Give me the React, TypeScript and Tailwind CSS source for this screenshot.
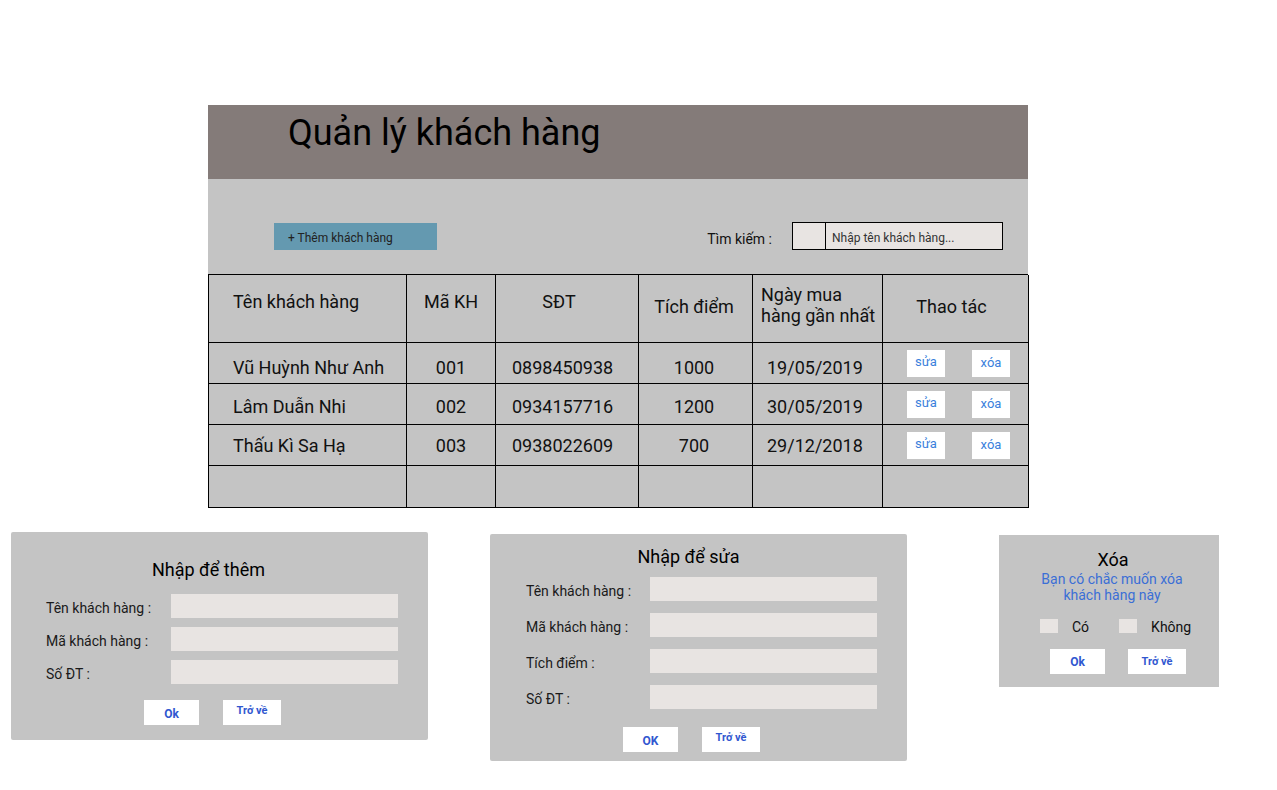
import React from 'react';

const rows = [
  { name: 'Vũ Huỳnh Như Anh', id: '001', phone: '0898450938', points: '1000', date: '19/05/2019', pad: 'pt-[8px]' },
  { name: 'Lâm Duẫn Nhi', id: '002', phone: '0934157716', points: '1200', date: '30/05/2019', pad: 'pt-[5px]' },
  { name: 'Thấu Kì Sa Hạ', id: '003', phone: '0938022609', points: '700', date: '29/12/2018', pad: 'pt-[1px]' },
];

const cell = 'border-r border-b border-black flex';

const FormRow: React.FC<{ label: string; labelW: string }> = ({ label, labelW }) => (
  <div className="flex items-center h-6">
    <span className={`${labelW} text-[14px] text-[#1a1a1a] pt-[4px]`}>{label}</span>
    <div className="w-[227px] h-6 bg-[#e8e4e2]" />
  </div>
);

const DialogButtons: React.FC<{ ok: string; offset: string }> = ({ ok, offset }) => (
  <div className={`flex gap-6 ${offset}`}>
    <button className="w-[55px] h-[25px] bg-white text-[12px] font-bold text-[#3157d0] pt-[3px]">{ok}</button>
    <button className="w-[58px] h-[25px] bg-white text-[11px] font-bold text-[#3157d0] pb-[2px]">Trở về</button>
  </div>
);

export default function App() {
  return (
    <div className="w-[1277px] h-[790px] bg-white pt-[105px] font-['Roboto','Liberation_Sans',sans-serif] text-black">
      <div className="ml-[208px] w-[820px] bg-[#c4c4c4]">
        <div className="h-[74px] bg-[#847b79] pl-[80px] pt-[4px]">
          <h1 className="text-[36px] leading-[48px] text-black">Quản lý khách hàng</h1>
        </div>
        <div className="h-[95px] flex items-start pt-[43px]">
          <button className="ml-[66px] mt-[1px] w-[163px] h-[27px] bg-[#6499b0] text-left pl-[14px] pt-[3px] text-[12px] text-[#222]">
            + Thêm khách hàng
          </button>
          <span className="ml-auto mt-[7px] text-[14px] text-[#111]">Tìm kiếm :</span>
          <div className="ml-[20px] mr-[25px] w-[211px] h-[28px] border border-black bg-[#e8e4e2] flex">
            <div className="w-[33px] h-full border-r border-black" />
            <span className="pl-[6px] pt-[6px] text-[12px] text-[#333]">Nhập tên khách hàng...</span>
          </div>
        </div>
        <div className="grid grid-cols-[198px_89px_143px_114px_130px_146px] border-l border-t border-black text-[18px] text-[#111]">
          <div className={`${cell} h-[68px] pl-6 pt-[13px]`}>Tên khách hàng</div>
          <div className={`${cell} justify-center pt-[13px]`}>Mã KH</div>
          <div className={`${cell} justify-center pt-[13px] pr-4`}>SĐT</div>
          <div className={`${cell} justify-center pt-[18px] pr-[3px]`}>Tích điểm</div>
          <div className={`${cell} pl-2 pt-[9px] leading-[21px]`}>Ngày mua<br />hàng gần nhất</div>
          <div className={`${cell} justify-center pt-[18px] pr-2`}>Thao tác</div>
          {rows.map(r => (
            <React.Fragment key={r.id}>
              <div className={`${cell} h-[41px] items-center pl-6 ${r.pad}`}>{r.name}</div>
              <div className={`${cell} items-center justify-center ${r.pad}`}>{r.id}</div>
              <div className={`${cell} items-center pl-4 ${r.pad}`}>{r.phone}</div>
              <div className={`${cell} items-center justify-center pr-[3px] ${r.pad}`}>{r.points}</div>
              <div className={`${cell} items-center pl-[14px] ${r.pad}`}>{r.date}</div>
              <div className={`${cell} items-center pl-[24px] gap-[27px]`}>
                <span className="w-[38px] h-[27px] bg-white text-[13px] text-[#3b7fdc] flex items-center justify-center pb-[2px]">sửa</span>
                <span className="w-[38px] h-[27px] bg-white text-[13px] text-[#3b7fdc] flex items-center justify-center">xóa</span>
              </div>
            </React.Fragment>
          ))}
          <div className={`${cell} h-[42px]`} />
          <div className={cell} />
          <div className={cell} />
          <div className={cell} />
          <div className={cell} />
          <div className={cell} />
        </div>
      </div>

      <div className="flex items-start mt-[24px]">
        <div className="ml-[11px] w-[417px] h-[208px] bg-[#c4c4c4] rounded-[2px] pt-[26px]">
          <h2 className="text-center text-[18px] leading-6 pr-[22px]">Nhập để thêm</h2>
          <div className="mt-3 pl-[35px] flex flex-col gap-[9px]">
            <FormRow label="Tên khách hàng :" labelW="w-[125px]" />
            <FormRow label="Mã khách hàng :" labelW="w-[125px]" />
            <FormRow label="Số ĐT :" labelW="w-[125px]" />
          </div>
          <div className="mt-4">
            <DialogButtons ok="Ok" offset="ml-[133px]" />
          </div>
        </div>

        <div className="ml-[62px] mt-[2px] w-[417px] h-[227px] bg-[#c4c4c4] rounded-[2px] pt-[11px]">
          <h2 className="text-center text-[18px] leading-6 pr-[20px]">Nhập để sửa</h2>
          <div className="mt-2 pl-[36px] flex flex-col gap-3">
            <FormRow label="Tên khách hàng :" labelW="w-[124px]" />
            <FormRow label="Mã khách hàng :" labelW="w-[124px]" />
            <FormRow label="Tích điểm :" labelW="w-[124px]" />
            <FormRow label="Số ĐT :" labelW="w-[124px]" />
          </div>
          <div className="mt-[18px]">
            <DialogButtons ok="OK" offset="ml-[133px]" />
          </div>
        </div>

        <div className="ml-[92px] mt-[3px] w-[220px] h-[152px] bg-[#c4c4c4] pt-[13px]">
          <h2 className="text-center text-[18px] leading-6 pl-[8px]">Xóa</h2>
          <p className="text-center text-[14px] leading-4 text-[#3b6fd6] -mt-[1px] pl-[6px]">
            Bạn có chắc muốn xóa<br />khách hàng này
          </p>
          <div className="mt-4 flex items-center pl-[41px] h-[14px]">
            <div className="w-[18px] h-[14px] bg-[#e8e4e2]" />
            <span className="ml-[14px] text-[14px] text-[#111] pt-[3px]">Có</span>
            <div className="ml-[30px] w-[18px] h-[14px] bg-[#e8e4e2]" />
            <span className="ml-[14px] text-[14px] text-[#111] pt-[3px]">Không</span>
          </div>
          <div className="mt-4 flex gap-[23px] ml-[51px]">
            <button className="w-[55px] h-[25px] bg-white text-[12px] font-bold text-[#3157d0]">Ok</button>
            <button className="w-[58px] h-[25px] bg-white text-[11px] font-bold text-[#3157d0] pt-[2px]">Trở về</button>
          </div>
        </div>
      </div>
    </div>
  );
}
